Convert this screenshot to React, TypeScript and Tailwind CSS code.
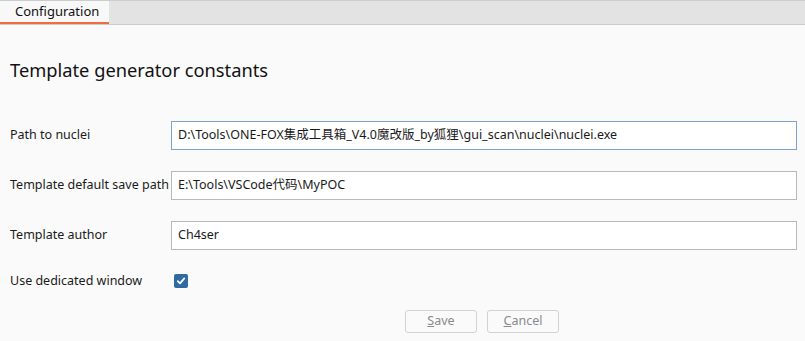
import React from "react";

const font = { fontFamily: '"Noto Sans", "Noto Sans CJK SC", sans-serif' };

function Field({ label, value, focused }: { label: string; value: string; focused?: boolean }) {
  return (
    <div className="flex items-center h-[29px]">
      <div className="w-[161px] shrink-0 text-[12.5px] text-[#1a1a1a] whitespace-nowrap">{label}</div>
      <div
        className={`flex-1 h-[29px] flex items-center px-[6px] bg-white border text-[12.5px] text-[#1a1a1a] ${
          focused ? "border-[#7da2ce]" : "border-[#b9b9b9]"
        }`}
      >
        {value}
      </div>
    </div>
  );
}

export default function App() {
  return (
    <div className="w-[805px] h-[341px] bg-[#fafafa] overflow-hidden" style={font}>
      {/* Tab strip */}
      <div className="h-[25px] flex bg-[#e3e3e3] border-t border-b border-[#c8cdcd]">
        <div className="w-[109px] bg-[#f8f8f8] border-b-2 border-[#f26b3a] flex items-center pl-[15px] text-[13px] text-[#111]">
          Configuration
        </div>
      </div>

      <div className="pl-[10px] pr-[8px]">
        <div className="mt-[32px] h-[26px] text-[18.3px] leading-[26px] text-[#111]">Template generator constants</div>

        <div className="mt-[38px] flex flex-col gap-[21px]">
          <Field label="Path to nuclei" value="D:\Tools\ONE-FOX集成工具箱_V4.0魔改版_by狐狸\gui_scan\nuclei\nuclei.exe" focused />
          <Field label="Template default save path" value="E:\Tools\VSCode代码\MyPOC" />
          <Field label="Template author" value="Ch4ser" />
          <div className="flex items-center h-[20px]">
            <div className="w-[164px] shrink-0 text-[12.5px] text-[#1a1a1a]">Use dedicated window</div>
            <div className="w-[14px] h-[14px] rounded-[2px] bg-[#2f6aa3] flex items-center justify-center">
              <svg width="10" height="10" viewBox="0 0 10 10">
                <path d="M1.8 5.2 L4 7.4 L8.3 2.4" fill="none" stroke="white" strokeWidth="1.8" strokeLinecap="round" strokeLinejoin="round" />
              </svg>
            </div>
          </div>
        </div>

        <div className="mt-[19px] flex">
          <div className="w-[395px] shrink-0" />
          <div className="flex gap-[10px]">
            <div className="w-[72px] h-[23px] rounded-[3px] border border-[#d2d2d2] bg-[#fafafa] flex items-center justify-center text-[12.5px] text-[#8a8a8a]">
              <span><span className="underline">S</span>ave</span>
            </div>
            <div className="w-[72px] h-[23px] rounded-[3px] border border-[#d2d2d2] bg-[#fafafa] flex items-center justify-center text-[12.5px] text-[#8a8a8a]">
              <span><span className="underline">C</span>ancel</span>
            </div>
          </div>
        </div>
      </div>
    </div>
  );
}
